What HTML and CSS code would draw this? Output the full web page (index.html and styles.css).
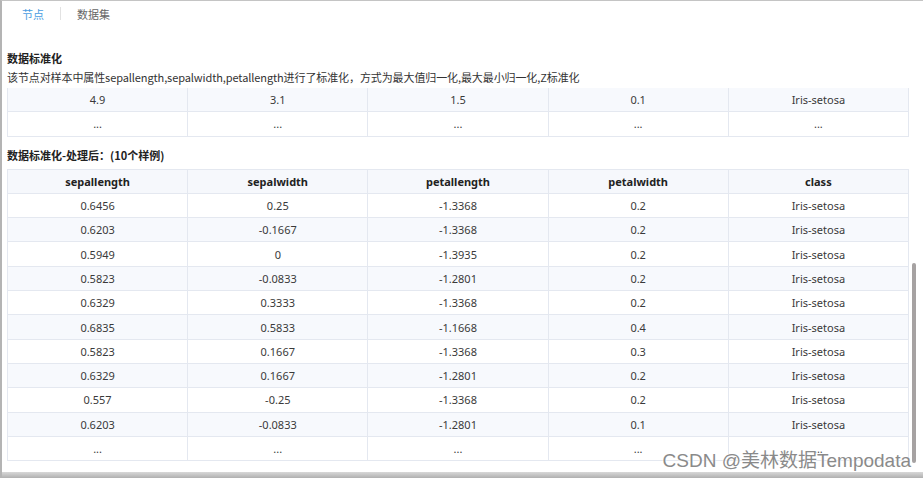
FILE: index.html
```html
<!DOCTYPE html>
<html lang="zh">
<head>
<meta charset="utf-8">
<link rel="stylesheet" href="styles.css">
</head>
<body>
<div class="frame">
  <div class="tabs">
    <span class="tab active">节点</span>
    <span class="sep"></span>
    <span class="tab">数据集</span>
  </div>
  <div class="content">
    <div class="title t1">数据标准化</div>
    <div class="desc">该节点对样本中属性sepallength,sepalwidth,petallength进行了标准化，方式为最大值归一化,最大最小归一化,Z标准化</div>
    <table class="grid top">
      <tr class="alt"><td>4.9</td><td>3.1</td><td>1.5</td><td>0.1</td><td>Iris-setosa</td></tr>
      <tr><td>...</td><td>...</td><td>...</td><td>...</td><td>...</td></tr>
    </table>
    <div class="title t2">数据标准化-处理后：(10个样例)</div>
    <table class="grid main">
      <tr class="head"><th>sepallength</th><th>sepalwidth</th><th>petallength</th><th>petalwidth</th><th>class</th></tr>
      <tr><td>0.6456</td><td>0.25</td><td>-1.3368</td><td>0.2</td><td>Iris-setosa</td></tr>
      <tr class="alt"><td>0.6203</td><td>-0.1667</td><td>-1.3368</td><td>0.2</td><td>Iris-setosa</td></tr>
      <tr><td>0.5949</td><td>0</td><td>-1.3935</td><td>0.2</td><td>Iris-setosa</td></tr>
      <tr class="alt"><td>0.5823</td><td>-0.0833</td><td>-1.2801</td><td>0.2</td><td>Iris-setosa</td></tr>
      <tr><td>0.6329</td><td>0.3333</td><td>-1.3368</td><td>0.2</td><td>Iris-setosa</td></tr>
      <tr class="alt"><td>0.6835</td><td>0.5833</td><td>-1.1668</td><td>0.4</td><td>Iris-setosa</td></tr>
      <tr><td>0.5823</td><td>0.1667</td><td>-1.3368</td><td>0.3</td><td>Iris-setosa</td></tr>
      <tr class="alt"><td>0.6329</td><td>0.1667</td><td>-1.2801</td><td>0.2</td><td>Iris-setosa</td></tr>
      <tr><td>0.557</td><td>-0.25</td><td>-1.3368</td><td>0.2</td><td>Iris-setosa</td></tr>
      <tr class="alt"><td>0.6203</td><td>-0.0833</td><td>-1.2801</td><td>0.1</td><td>Iris-setosa</td></tr>
      <tr><td>...</td><td>...</td><td>...</td><td>...</td><td>...</td></tr>
    </table>
  </div>
  <div class="scrollbar"></div>
  <div class="watermark">CSDN @美林数据Tempodata</div>
  <div class="shadow"></div>
</div>
</body>
</html>
```
FILE: styles.css
```css
html, body {
  margin: 0;
  padding: 0;
  background: #ffffff;
}
body {
  font-family: "Noto Sans", "Noto Sans CJK SC", sans-serif;
  color: #333;
}
.frame {
  position: relative;
  width: 923px;
  height: 478px;
  box-sizing: border-box;
  border-top: 1px solid #c4c4c4;
  border-left: 2px solid #b4b4b4;
  overflow: hidden;
  background: #fff;
}
.tabs {
  height: 25px;
  display: flex;
  align-items: center;
  padding-left: 20px;
  font-size: 11px;
}
.tab {
  color: #666;
  font-family: "Noto Sans CJK SC", sans-serif;
}
.tab.active {
  color: #4a9de2;
}
.sep {
  width: 1px;
  height: 13px;
  background: #e2e2e2;
  margin: 0 16px;
}
.content {
  padding-left: 5px;
  width: 902px;
}
.title {
  font-size: 11px;
  font-weight: bold;
  line-height: 16px;
  color: #222;
  font-family: "Noto Sans CJK SC", sans-serif;
}
.t1 {
  margin-top: 24px;
}
.desc {
  font-size: 11px;
  line-height: 16px;
  margin-top: 3px;
  color: #333;
  letter-spacing: -0.1px;
  font-family: "Noto Sans CJK SC", sans-serif;
}
.t2 {
  margin-top: 10px;
}
.grid {
  width: 902px;
  border-collapse: collapse;
  table-layout: fixed;
  font-size: 11px;
}
.grid.top {
  margin-top: 3px;
}
.grid.main {
  margin-top: 6px;
}
.grid td, .grid th {
  border: 1px solid #e4e8f0;
  height: 23.3px;
  padding: 0;
  text-align: center;
  color: #3a3a3a;
}
.grid th {
  font-weight: bold;
  color: #222;
}
.grid tr.head {
  background: #f6f8fc;
}
.grid tr.alt {
  background: #f7f9fd;
}
.grid.top tr:first-child td {
  border-top: none;
}
.scrollbar {
  position: absolute;
  left: 910px;
  top: 262px;
  width: 4px;
  height: 200px;
  background: #a6a2a2;
  border-radius: 2px;
}
.watermark {
  position: absolute;
  right: 12px;
  top: 444px;
  font-size: 19px;
  color: #8a8a8a;
  font-family: "Liberation Sans", "Noto Sans CJK SC", sans-serif;
  text-shadow: 0 0 2px #fff, 0 0 2px #fff;
}
.shadow {
  position: absolute;
  left: 0;
  right: 0;
  bottom: 0;
  height: 6px;
  background: linear-gradient(#d8d8d8, #b0b0b0);
}
```
